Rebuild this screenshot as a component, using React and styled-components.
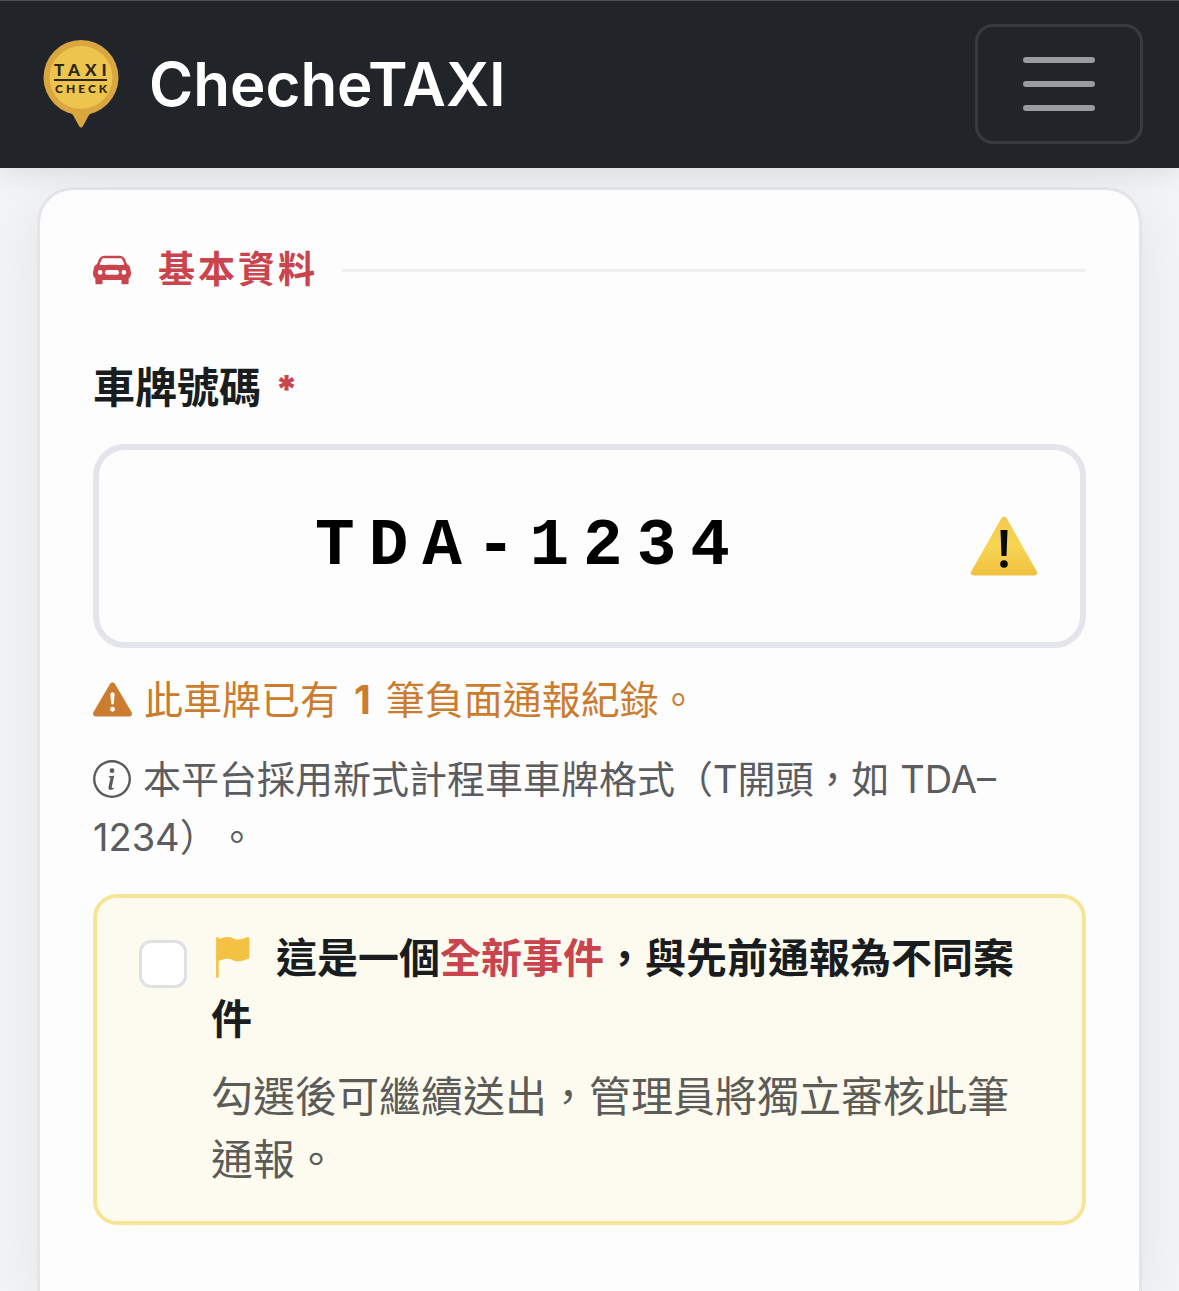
import React, { useState } from "react";
import styled, { createGlobalStyle } from "styled-components";
import {
  BsCarFrontFill,
  BsExclamationTriangleFill,
  BsFlagFill,
  BsInfoCircle,
} from "react-icons/bs";

const GlobalStyle = createGlobalStyle`
  * {
    box-sizing: border-box;
  }
  body {
    margin: 0;
    background: #f3f4f6;
    color: #1a1d20;
    font-family: Inter, "Noto Sans CJK TC", sans-serif;
    text-spacing-trim: space-all;
  }
`;

const Page = styled.div`
  display: flex;
  flex-direction: column;
  min-height: 100vh;
  overflow: hidden;
`;

const Navbar = styled.header`
  display: flex;
  align-items: center;
  justify-content: space-between;
  padding: 23px 36px 24px;
  background: #212529;
  border-top: 1px solid #4d5256;
  box-shadow: 0 6px 24px rgba(0, 0, 0, 0.09);
  position: relative;
`;

const Brand = styled.a`
  display: flex;
  align-items: center;
  gap: 23px;
  color: #fff;
  font-size: 60px;
  font-weight: 600;
  line-height: 90px;
  text-decoration: none;
`;

const Logo = styled.svg`
  width: 90px;
  height: 90px;
`;

const Toggler = styled.button`
  display: flex;
  padding: 12px 36px;
  background: transparent;
  border: 3px solid #373b3f;
  border-radius: 18px;
  cursor: pointer;

  svg {
    width: 90px;
    height: 90px;
  }
`;

const Card = styled.main`
  flex: 1;
  margin: 19px 37px 0;
  padding: 53px 53px 60px;
  background: #fdfdfe;
  border: 3px solid #e4e5e9;
  border-bottom: 0;
  border-radius: 36px 36px 0 0;
  box-shadow: 0 12px 60px rgba(0, 0, 0, 0.07);
`;

const SectionTitle = styled.h2`
  display: flex;
  align-items: center;
  margin: 0 0 59px;
  color: #c9444d;
  font-size: 37px;
  font-weight: 700;
  line-height: 54px;
  letter-spacing: 3px;

  svg {
    margin-right: 27px;
  }

  &::after {
    content: "";
    flex: 1;
    height: 3px;
    margin-left: 24px;
    background: #eeeff1;
  }
`;

const Label = styled.label`
  display: block;
  margin-bottom: 25px;
  font-size: 42px;
  font-weight: 700;
  line-height: 63px;
`;

const Required = styled.span`
  margin-left: 4px;
  color: #c9444d;
  font-size: 38px;
  font-weight: 900;
  line-height: 1;
`;

const PlateField = styled.div`
  position: relative;
  margin-bottom: 23px;
`;

const PlateInput = styled.input`
  display: block;
  width: 100%;
  height: 204px;
  padding: 0 156px 0 36px;
  background: #fdfdfe;
  border: 6px solid #e4e5ea;
  border-radius: 32px;
  color: #000;
  font-family: "Liberation Mono", monospace;
  font-size: 66px;
  font-weight: 700;
  letter-spacing: 14px;
  text-align: center;
  text-transform: uppercase;
  outline: none;
`;

const PlateStatus = styled.svg`
  position: absolute;
  top: 50%;
  right: 48px;
  width: 68px;
  height: 60px;
  transform: translateY(-50%);
`;

const Note = styled.p`
  margin: 0 0 ${(props) => (props.$warn ? 21 : 28)}px;
  color: ${(props) => (props.$warn ? "#cc7c2e" : "#5b5c5f")};
  font-size: ${(props) => (props.$warn ? 39 : 38)}px;
  line-height: 58px;

  svg {
    margin-right: 12px;
    vertical-align: -5px;
  }

  strong {
    margin: 0 4px;
  }
`;

const NewCase = styled.div`
  display: flex;
  align-items: flex-start;
  gap: 24px;
  padding: 30px 42px;
  background: #fdfbf0;
  border: 4px solid #f7e596;
  border-radius: 24px;
`;

const Checkbox = styled.input`
  appearance: none;
  flex: none;
  width: 48px;
  height: 48px;
  margin: 12px 0 0;
  background: #fff;
  border: 3px solid #dfe1e5;
  border-radius: 12px;

  &:checked {
    background: #f4c242;
  }
`;

const CaseLabel = styled.label`
  display: block;
  flex: 1;
`;

const CaseTitle = styled.span`
  display: block;
  margin-bottom: 15px;
  font-size: 41px;
  font-weight: 700;
  line-height: 61px;

  svg {
    margin-right: 24px;
    color: #f4c242;
    vertical-align: -5px;
  }
`;

const Highlight = styled.span`
  color: #c9444d;
`;

const CaseText = styled.span`
  display: block;
  color: #5b5b58;
  font-size: 42px;
  line-height: 63px;
`;

const TaxiLogo = () => (
  <Logo viewBox="0 0 90 90" aria-hidden="true">
    <path d="M30 71q5 2 7 5l6 11q2 3 4 0l6-11q2-3 7-5z" fill="#dba640" />
    <circle cx="45" cy="38.500" r="37.500" fill="#dba640" />
    <circle cx="45" cy="38.500" r="31.500" fill="#edc44e" />
    <g fill="#2c2613" fontFamily="Lato, sans-serif" fontWeight="900">
      <text x="18" y="37" fontSize="17" letterSpacing="5">
        TAXI
      </text>
      <text x="19" y="54" fontSize="12" letterSpacing="3">
        CHECK
      </text>
      <rect x="18" y="40" width="53" height="2" />
    </g>
  </Logo>
);

const WarningSign = () => (
  <PlateStatus viewBox="0 0 68 60" role="img" aria-label="警告">
    <defs>
      <linearGradient id="sign" x1="0" y1="0" x2="0" y2="1">
        <stop offset="0" stopColor="#f3c94f" />
        <stop offset="0.5" stopColor="#f7d553" />
        <stop offset="1" stopColor="#f2c040" />
      </linearGradient>
    </defs>
    <path
      d="M31.500 2q2.500-3 5 0L66.500 55q2 4-2.500 4.500H4Q-.5 59 1.500 55z"
      fill="url(#sign)"
    />
    <path d="M30.500 14h7l-1 26h-5z" fill="#0a0a0a" />
    <circle cx="34" cy="48" r="3.800" fill="#0a0a0a" />
  </PlateStatus>
);

const App = () => {
  const [plate, setPlate] = useState("TDA-1234");
  const [isNew, setIsNew] = useState(false);

  return (
    <>
      <GlobalStyle />
      <Page>
        <Navbar>
          <Brand href="#">
            <TaxiLogo />
            ChecheTAXI
          </Brand>
          <Toggler type="button" aria-label="選單">
            <svg viewBox="0 0 30 30" fill="none">
              <path
                d="M4 7h22M4 15h22M4 23h22"
                stroke="#9b9c9f"
                strokeWidth="2"
                strokeLinecap="round"
              />
            </svg>
          </Toggler>
        </Navbar>
        <Card>
          <SectionTitle>
            <BsCarFrontFill size={38} />
            基本資料
          </SectionTitle>
          <Label htmlFor="plate">
            車牌號碼 <Required>*</Required>
          </Label>
          <PlateField>
            <PlateInput
              id="plate"
              type="text"
              value={plate}
              onChange={(e) => setPlate(e.target.value)}
            />
            <WarningSign />
          </PlateField>
          <Note $warn>
            <BsExclamationTriangleFill size={39} />
            此車牌已有 <strong>1</strong> 筆負面通報紀錄。
          </Note>
          <Note>
            <BsInfoCircle size={38} />
            本平台採用新式計程車車牌格式（T開頭，如 TDA–1234）。
          </Note>
          <NewCase>
            <Checkbox
              id="new-case"
              type="checkbox"
              checked={isNew}
              onChange={(e) => setIsNew(e.target.checked)}
            />
            <CaseLabel htmlFor="new-case">
              <CaseTitle>
                <BsFlagFill size={41} />
                這是一個<Highlight>全新事件</Highlight>，與先前通報為不同案件
              </CaseTitle>
              <CaseText>
                勾選後可繼續送出，管理員將獨立審核此筆通報。
              </CaseText>
            </CaseLabel>
          </NewCase>
        </Card>
      </Page>
    </>
  );
};

export default App;
